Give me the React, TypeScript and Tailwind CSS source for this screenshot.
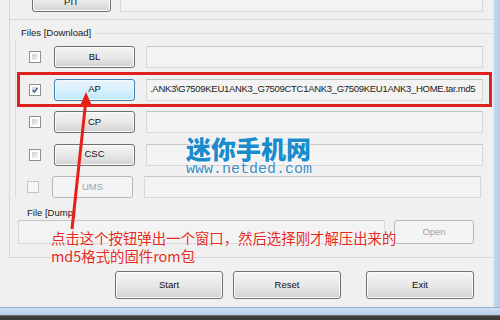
import React from 'react';

type Kind = 'normal' | 'hot' | 'off';

const btnKind: Record<Kind, string> = {
    normal: 'border-[#707070] bg-linear-to-b from-[#f4f4f4] via-[#e8e8e8] to-[#d2d2d2] text-[#111] shadow-[inset_0_0_0_1px_#fbfbfb]',
    hot: 'border-[#3c7fb1] bg-linear-to-b from-[#eaf6fd] via-[#d9f0fc] to-[#bee6fd] text-[#111] shadow-[inset_0_0_0_1px_#f4fbff]',
    off: 'border-[#b5b8ba] bg-[#f4f4f4] text-[#a3a3a3]',
};

const Btn = ({ label, kind = 'normal', className }: { label: string; kind?: Kind; className: string }) => (
    <div className={`flex items-center justify-center rounded-[3px] border ${btnKind[kind]} ${className}`}>{label}</div>
);

const Field = ({ className, text }: { className: string; text?: string }) => (
    <div className={`flex items-center overflow-hidden whitespace-nowrap border border-[#d8d8d8] border-t-[#c6c6c6] bg-[#f3f3f3] pl-[3px] tracking-[-0.3px] text-[#1a1a1a] ${className}`}>
        {text}
    </div>
);

const Check = ({ checked, disabled }: { checked?: boolean; disabled?: boolean }) =>
    disabled ? (
        <div className="h-[12px] w-[12px] border border-[#c5c5c5] bg-[#f7f7f7]" />
    ) : (
        <div className="h-[12px] w-[12px] border border-[#8e8f8f] bg-white p-[2px]">
            <div className="relative h-full w-full bg-linear-to-br from-[#cbcfd5] to-[#f4f5f6]">
                {checked && (
                    <svg viewBox="0 0 6 6" className="absolute inset-0 h-full w-full">
                        <path d="M0.6 3.1 L2.4 4.9 L5.4 0.9" fill="none" stroke="#3a4f7a" strokeWidth="1.3" />
                    </svg>
                )}
            </div>
        </div>
    );

const rows = [
    { label: 'BL' },
    { label: 'AP', checked: true, hot: true, path: '.ANK3\\G7509KEU1ANK3_G7509CTC1ANK3_G7509KEU1ANK3_HOME.tar.md5' },
    { label: 'CP' },
    { label: 'CSC' },
    { label: 'UMS', disabled: true },
];

export default function App() {
    return (
        <div className="relative flex h-[320px] w-[500px] flex-col overflow-hidden bg-[#f0f0f0] font-['Liberation_Sans',Arial,sans-serif] text-[9.5px]">
            <div className="flex h-[307px]">
                <div className="flex w-[493px] flex-col">
                    {/* option pages */}
                    <div className="ml-[9px] flex h-[258px] w-[484px] flex-col border-b border-l border-[#d5d5d5]">
                        {/* PIT */}
                        <div className="flex h-[20px] items-start border-b border-[#d5d5d5]">
                            <Btn label="PIT" className="-mt-[8px] ml-[22px] h-[20px] w-[79px]" />
                            <Field className="-mt-[8px] ml-[9px] h-[20px] w-[363px]" />
                        </div>

                        {/* Files [Download] */}
                        <div className="mt-[6px] flex h-[14px] items-center">
                            <span className="pl-[11px] text-[#1a1a1a]">Files [Download]</span>
                            <div className="ml-[4px] h-px flex-1 bg-[#dcdcdc]" />
                        </div>
                        <div className="ml-[5px] flex flex-col gap-[10.5px] border-l border-[#dcdcdc] pt-[6px]">
                            {rows.map((r) => (
                                <div key={r.label} className="flex h-[22px] items-center">
                                    <div className={r.disabled ? 'ml-[11px] w-[14px]' : 'ml-[13px] w-[12px]'}>
                                        <Check checked={r.checked} disabled={r.disabled} />
                                    </div>
                                    <Btn
                                        label={r.label}
                                        kind={r.hot ? 'hot' : r.disabled ? 'off' : 'normal'}
                                        className={r.disabled ? 'ml-[11px] h-[22px] w-[81px]' : 'ml-[13px] h-[22px] w-[81px]'}
                                    />
                                    <Field className="ml-[11px] h-[22px] w-[337px]" text={r.path} />
                                </div>
                            ))}
                        </div>

                        {/* File [Dump] */}
                        <div className="mt-[8px] h-[13px] pl-[17px] leading-[13px] text-[#1a1a1a]">File [Dump]</div>
                        <div className="mt-[1px] flex h-[24px] items-center">
                            <Field className="ml-[8px] h-[24px] w-[367px]" />
                            <Btn label="Open" kind="off" className="ml-[9px] h-[24px] w-[80px]" />
                        </div>
                    </div>

                    {/* main buttons */}
                    <div className="mt-[13px] flex h-[28px]">
                        <Btn label="Start" className="ml-[115px] h-[28px] w-[108px]" />
                        <Btn label="Reset" className="ml-[10px] h-[28px] w-[108px]" />
                        <Btn label="Exit" className="ml-[25px] h-[28px] w-[108px]" />
                    </div>
                </div>
                {/* window frame, right */}
                <div className="w-[7px] border-l border-[#dfe6ee] bg-linear-to-r from-[#c4d8ee] to-[#b3cce8]" />
            </div>
            {/* window frame, bottom */}
            <div className="h-[8px] border-t border-[#93b1d2] bg-linear-to-b from-[#cfe0f2] to-[#b6cde8]" />
            <div className="h-[5px] border-t border-[#6d6d6d] bg-[#3d3d3d]" />

            {/* annotation */}
            <div className="absolute left-[17px] top-[72px] h-[35px] w-[475px] border-[3px] border-[#e0201c]" />
            <svg className="pointer-events-none absolute left-0 top-0 h-[320px] w-[500px]" viewBox="0 0 500 320">
                <line x1="85.5" y1="104" x2="72" y2="229" stroke="#e8201a" strokeWidth="3" />
                <polygon points="86,92 79.5,107 92.5,107" fill="#e8201a" />
            </svg>

            <div className="absolute left-[186px] top-[134px] flex flex-col">
                <span className="font-['Noto_Sans_CJK_SC',sans-serif] text-[25px] font-black leading-[28px] text-[#1a8bcb] [text-shadow:0_0_2px_#fff,0_0_3px_#fff]">
                    迷你手机网
                </span>
                <span className="font-['Liberation_Mono',monospace] text-[15px] leading-[16px] text-[#3b8cc0] [text-shadow:0_0_2px_#fff,0_0_2px_#fff]">
                    www.netded.com
                </span>
            </div>

            <div className="absolute left-[51px] top-[229px] font-['Noto_Sans_CJK_SC',sans-serif] text-[14.4px] leading-[18px] text-[#e42a20] [text-shadow:0_0_2px_#fff,0_0_2px_#fff]">
                <div>点击这个按钮弹出一个窗口，然后选择刚才解压出来的</div>
                <div>md5格式的固件rom包</div>
            </div>
        </div>
    );
}
